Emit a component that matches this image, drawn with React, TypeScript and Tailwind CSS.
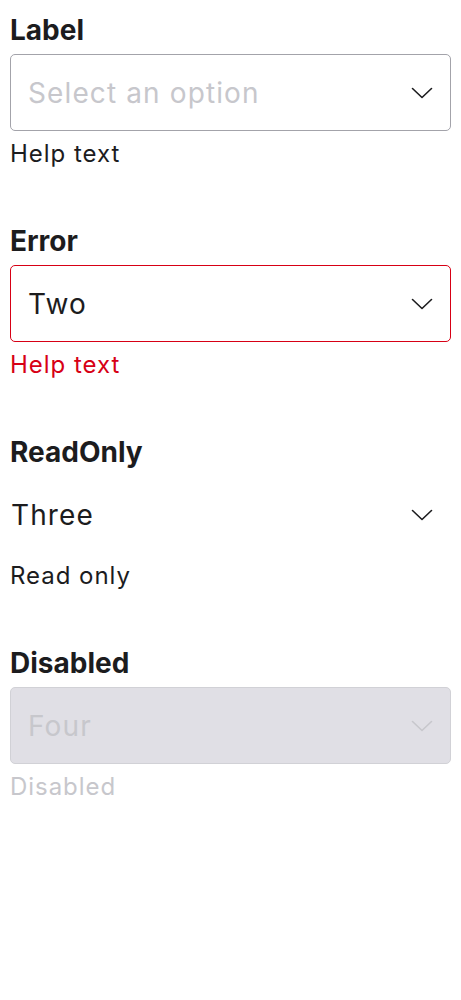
import { useState } from "react";

type Variant = "default" | "error" | "readonly" | "disabled";

type Field = {
  label: string;
  value: string;
  placeholder?: string;
  help: string;
  variant: Variant;
};

const fields: Field[] = [
  { label: "Label", value: "", placeholder: "Select an option", help: "Help text", variant: "default" },
  { label: "Error", value: "Two", help: "Help text", variant: "error" },
  { label: "ReadOnly", value: "Three", help: "Read only", variant: "readonly" },
  { label: "Disabled", value: "Four", help: "Disabled", variant: "disabled" },
];

function Chevron({ className }: { className?: string }) {
  return (
    <svg width="22" height="12" viewBox="0 0 22 12" fill="none" className={className}>
      <path d="M1.5 1.5 L11 10.5 L20.5 1.5" stroke="currentColor" strokeWidth="1.6" strokeLinecap="round" strokeLinejoin="round" />
    </svg>
  );
}

function SelectField({ field }: { field: Field }) {
  const [value] = useState(field.value);
  const { variant } = field;

  const boxClass = {
    default: "border border-[#a3a3aa] bg-white pl-[17px]",
    error: "border border-[#d70015] bg-white pl-[17px]",
    readonly: "border border-transparent bg-white pl-0",
    disabled: "border border-[#d1d1d6] bg-[#e0dfe5] pl-[17px]",
  }[variant];

  const textClass = variant === "disabled" ? "text-[#c7c7cc]" : value ? "text-[#1c1c1e]" : "text-[#c7c7cc]";
  const chevronClass = variant === "disabled" ? "text-[#c7c7cc]" : "text-[#1c1c1e]";
  const helpClass = {
    default: "text-[#1c1c1e]",
    error: "text-[#d70015]",
    readonly: "text-[#1c1c1e]",
    disabled: "text-[#c7c7cc]",
  }[variant];

  return (
    <div className="flex flex-col">
      <div className="text-[28px] leading-[34px] font-bold text-[#1c1c1e]">{field.label}</div>
      <div className={`mt-[7px] h-[77px] rounded-[5px] flex items-center justify-between pr-[17px] ${boxClass}`}>
        <span className={`text-[28px] leading-[34px] tracking-[0.04em] ${textClass}`}>{value || field.placeholder}</span>
        <Chevron className={chevronClass} />
      </div>
      <div className={`mt-2 text-[24px] leading-[29px] tracking-[0.04em] ${helpClass}`}>{field.help}</div>
    </div>
  );
}

export default function App() {
  return (
    <div className="min-h-screen bg-white px-[10px] pt-[13px] flex flex-col gap-[56px] font-['Inter',sans-serif]">
      {fields.map((f) => (
        <SelectField key={f.label} field={f} />
      ))}
    </div>
  );
}
